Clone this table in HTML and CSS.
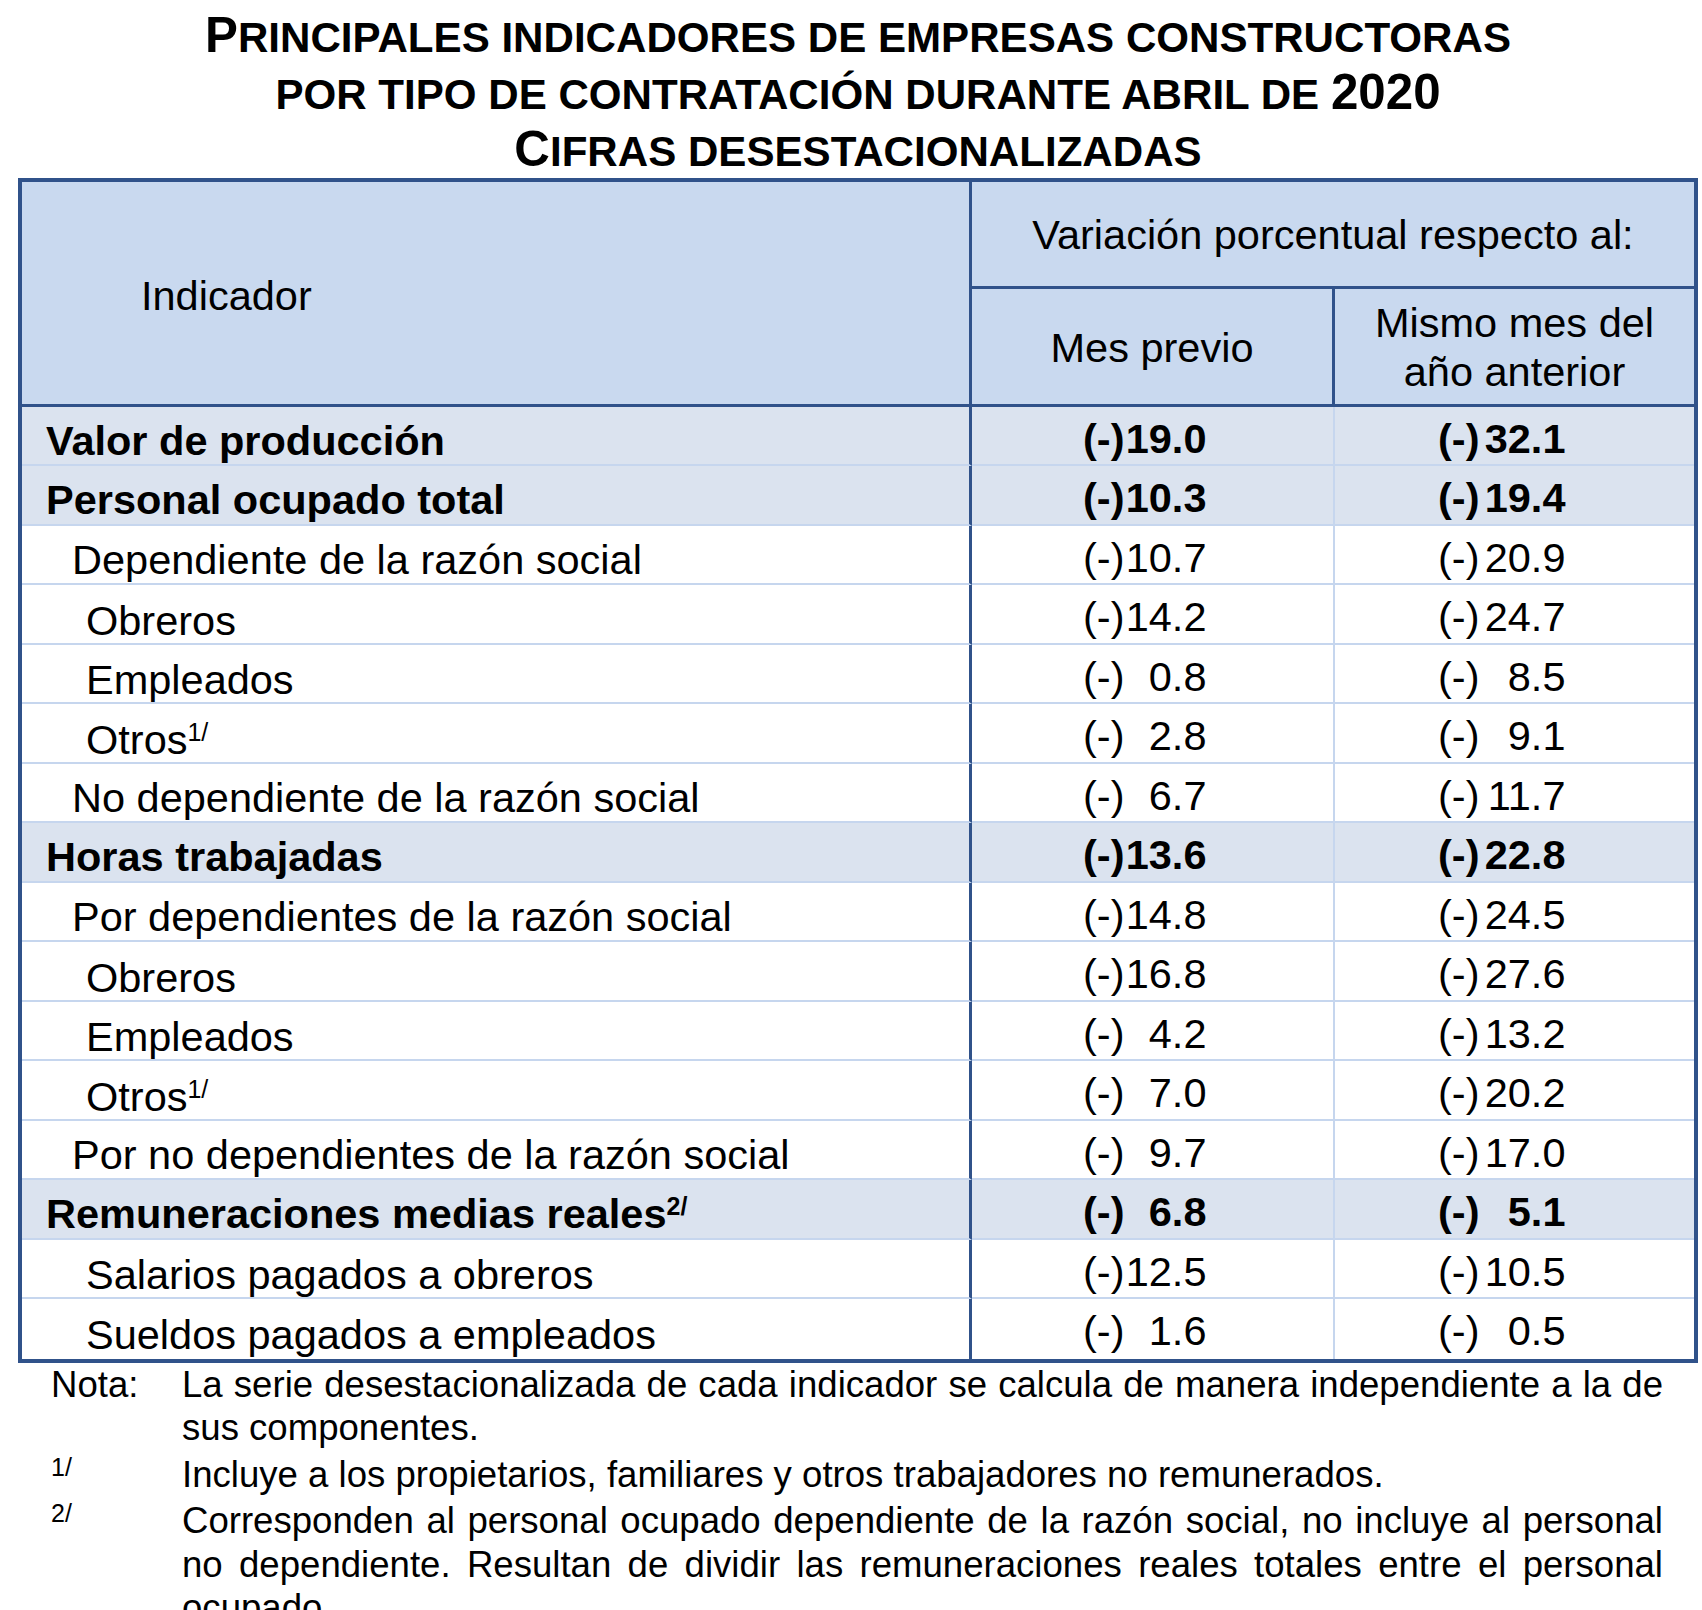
FILE: index.html
```html
<!DOCTYPE html>
<html lang="es">
<head>
<meta charset="utf-8">
<title>Principales indicadores de empresas constructoras</title>
<link rel="stylesheet" href="styles.css">
</head>
<body>
<div class="page">
  <h1 class="title">
    <span class="tl">P<span class="sc">rincipales indicadores de empresas constructoras</span></span>
    <span class="tl"><span class="sc">por tipo de contratación durante abril de </span>2020</span>
    <span class="tl">C<span class="sc">ifras desestacionalizadas</span></span>
  </h1>

  <div class="tbl">
    <div class="h-ind">Indicador</div>
    <div class="h-var">Variación porcentual respecto al:</div>
    <div class="h-mes">Mes previo</div>
    <div class="h-mismo">Mismo mes del<br>año anterior</div>

    <div class="row b"><div class="lab l1">Valor de producción</div><div class="n c2"><span class="s">(-)</span><span class="v">19.0</span></div><div class="n c3"><span class="s">(-)</span><span class="v">32.1</span></div></div>
    <div class="row b"><div class="lab l1">Personal ocupado total</div><div class="n c2"><span class="s">(-)</span><span class="v">10.3</span></div><div class="n c3"><span class="s">(-)</span><span class="v">19.4</span></div></div>
    <div class="row"><div class="lab l2">Dependiente de la razón social</div><div class="n c2"><span class="s">(-)</span><span class="v">10.7</span></div><div class="n c3"><span class="s">(-)</span><span class="v">20.9</span></div></div>
    <div class="row"><div class="lab l3">Obreros</div><div class="n c2"><span class="s">(-)</span><span class="v">14.2</span></div><div class="n c3"><span class="s">(-)</span><span class="v">24.7</span></div></div>
    <div class="row"><div class="lab l3">Empleados</div><div class="n c2"><span class="s">(-)</span><span class="v">0.8</span></div><div class="n c3"><span class="s">(-)</span><span class="v">8.5</span></div></div>
    <div class="row"><div class="lab l3">Otros<sup class="sup">1/</sup></div><div class="n c2"><span class="s">(-)</span><span class="v">2.8</span></div><div class="n c3"><span class="s">(-)</span><span class="v">9.1</span></div></div>
    <div class="row"><div class="lab l2">No dependiente de la razón social</div><div class="n c2"><span class="s">(-)</span><span class="v">6.7</span></div><div class="n c3"><span class="s">(-)</span><span class="v">11.7</span></div></div>
    <div class="row b"><div class="lab l1">Horas trabajadas</div><div class="n c2"><span class="s">(-)</span><span class="v">13.6</span></div><div class="n c3"><span class="s">(-)</span><span class="v">22.8</span></div></div>
    <div class="row"><div class="lab l2">Por dependientes de la razón social</div><div class="n c2"><span class="s">(-)</span><span class="v">14.8</span></div><div class="n c3"><span class="s">(-)</span><span class="v">24.5</span></div></div>
    <div class="row"><div class="lab l3">Obreros</div><div class="n c2"><span class="s">(-)</span><span class="v">16.8</span></div><div class="n c3"><span class="s">(-)</span><span class="v">27.6</span></div></div>
    <div class="row"><div class="lab l3">Empleados</div><div class="n c2"><span class="s">(-)</span><span class="v">4.2</span></div><div class="n c3"><span class="s">(-)</span><span class="v">13.2</span></div></div>
    <div class="row"><div class="lab l3">Otros<sup class="sup">1/</sup></div><div class="n c2"><span class="s">(-)</span><span class="v">7.0</span></div><div class="n c3"><span class="s">(-)</span><span class="v">20.2</span></div></div>
    <div class="row"><div class="lab l2">Por no dependientes de la razón social</div><div class="n c2"><span class="s">(-)</span><span class="v">9.7</span></div><div class="n c3"><span class="s">(-)</span><span class="v">17.0</span></div></div>
    <div class="row b"><div class="lab l1">Remuneraciones medias reales<sup class="sup">2/</sup></div><div class="n c2"><span class="s">(-)</span><span class="v">6.8</span></div><div class="n c3"><span class="s">(-)</span><span class="v">5.1</span></div></div>
    <div class="row"><div class="lab l3">Salarios pagados a obreros</div><div class="n c2"><span class="s">(-)</span><span class="v">12.5</span></div><div class="n c3"><span class="s">(-)</span><span class="v">10.5</span></div></div>
    <div class="row last"><div class="lab l3">Sueldos pagados a empleados</div><div class="n c2"><span class="s">(-)</span><span class="v">1.6</span></div><div class="n c3"><span class="s">(-)</span><span class="v">0.5</span></div></div>
  </div>

  <div class="notes">
    <div class="mark">Nota:</div>
    <p class="txt">La serie desestacionalizada de cada indicador se calcula de manera independiente a la de sus componentes.</p>
    <div class="mark fn">1/</div>
    <p class="txt">Incluye a los propietarios, familiares y otros trabajadores no remunerados.</p>
    <div class="mark fn">2/</div>
    <p class="txt">Corresponden al personal ocupado dependiente de la razón social, no incluye al personal no dependiente. Resultan de dividir las remuneraciones reales totales entre el personal ocupado.</p>
  </div>
</div>
</body>
</html>
```

FILE: styles.css
```css
html {
  overflow: hidden;
}

body {
  margin: 0;
  background: #ffffff;
  color: #000000;
  font-family: "Liberation Sans", Arial, Helvetica, sans-serif;
}

.page {
  padding: 6px 0 0 18px;
  width: 1680px;
}

/* ---------- Title ---------- */
.title {
  margin: 0;
  text-align: center;
  font-weight: 700;
  font-size: 49.3px;
  line-height: 57.2px;
}

.tl {
  display: block;
}

.sc {
  font-size: 42.1px;
  line-height: 1;
  text-transform: uppercase;
}

/* ---------- Table ---------- */
.tbl {
  display: grid;
  grid-template-columns: 950px 363px 359px;
  grid-template-rows: 107px 118px repeat(16, 59.5px);
  width: 1680px;
  box-sizing: border-box;
  border: 4px solid #30528a;
  font-size: 41.5px;
}

.tbl > div,
.row > div {
  box-sizing: border-box;
}

.h-ind,
.h-var,
.h-mes,
.h-mismo {
  background: #c9d9ef;
  display: flex;
  align-items: center;
  line-height: 41.5px;
}

.h-ind {
  grid-row: 1 / span 2;
  grid-column: 1;
  padding: 6px 0 0 119px;
  border-right: 3px solid #30528a;
  border-bottom: 3px solid #30528a;
}

.h-var {
  grid-column: 2 / span 2;
  grid-row: 1;
  justify-content: center;
  padding-top: 2px;
  border-bottom: 3px solid #30528a;
}

.h-mes {
  grid-column: 2;
  grid-row: 2;
  justify-content: center;
  padding-top: 3px;
  border-right: 3px solid #30528a;
  border-bottom: 3px solid #30528a;
}

.h-mismo {
  grid-column: 3;
  grid-row: 2;
  justify-content: center;
  text-align: center;
  padding-top: 3px;
  line-height: 48.5px;
  border-bottom: 3px solid #30528a;
}

.row {
  display: contents;
}

.row > div {
  line-height: 41.5px;
  white-space: nowrap;
  border-bottom: 2px solid #c6d6ee;
}

.row.last > div {
  border-bottom: 0;
}

.row.b > div {
  background: #dbe3ef;
  font-weight: 700;
}

.lab {
  padding-top: 13px;
  border-right: 3px solid #30528a;
}

.l1 {
  padding-left: 24px;
}

.l2 {
  padding-left: 50px;
}

.l3 {
  padding-left: 64px;
  padding-top: 14.5px;
}

.n {
  padding-top: 11px;
  display: flex;
}

.c2 {
  padding-left: 111px;
  border-right: 2px solid #c6d6ee;
}

.c3 {
  padding-left: 103px;
}

.s {
  flex: none;
}

.v {
  flex: none;
  text-align: right;
}

.c2 .v {
  width: 82px;
}

.c3 .v {
  width: 86px;
}

.sup {
  font-size: 25px;
  line-height: 0;
  vertical-align: 13px;
}

/* ---------- Notes ---------- */
.notes {
  display: grid;
  grid-template-columns: 131px 1481px;
  row-gap: 3px;
  margin-left: 33px;
  font-size: 36.6px;
  line-height: 43.5px;
}

.mark {
  margin: 0;
}

.mark.fn {
  font-size: 25px;
  line-height: 29px;
}

.txt {
  margin: 0;
  text-align: justify;
}
```
